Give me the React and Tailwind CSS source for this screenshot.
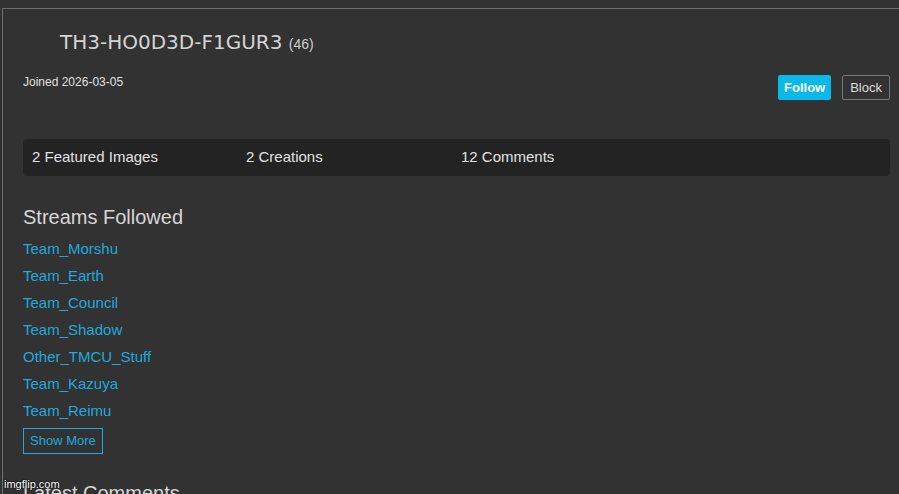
import React from 'react';

const streams = [
  'Team_Morshu',
  'Team_Earth',
  'Team_Council',
  'Team_Shadow',
  'Other_TMCU_Stuff',
  'Team_Kazuya',
  'Team_Reimu',
];

const stats = ['2 Featured Images', '2 Creations', '12 Comments'];

const App = () => {
  return (
    <div
      className="relative h-[494px] overflow-hidden bg-[#323232] pt-[8px]"
      style={{ fontFamily: '"Liberation Sans", Arial, sans-serif' }}
    >
      <div className="ml-[2px] h-full border-l border-t border-[#6e6e6e] pl-[20px] pr-[9px]">
        {/* Header */}
        <h1
          className="mt-[21px] ml-[37px] text-[20px] leading-[24px] text-[#d4d4d4]"
          style={{ fontFamily: '"DejaVu Sans", sans-serif' }}
        >
          TH3-HO0D3D-F1GUR3{' '}
          <span className="text-[14px] text-[#cfcfcf]" style={{ fontFamily: '"Liberation Sans", Arial, sans-serif' }}>
            (46)
          </span>
        </h1>

        <div className="mt-[17px] flex items-start justify-between">
          <div className="pt-[2px] text-[12px] leading-[14px] text-[#e0e0e0]">Joined 2026-03-05</div>
          <div className="mt-[2px] flex gap-[11px]">
            <button className="h-[25px] rounded-[2px] bg-[#0bb8ea] px-[6px] text-[13px] font-bold text-white">
              Follow
            </button>
            <button className="h-[25px] rounded-[2px] border border-[#777] px-[7px] text-[13px] text-[#dcdcdc]">
              Block
            </button>
          </div>
        </div>

        {/* Stats bar */}
        <div className="mt-[39px] flex h-[37px] items-center rounded-[4px] bg-[#232323] px-[9px] text-[15px] text-[#e2e2e2]">
          <div className="w-[214px]">{stats[0]}</div>
          <div className="w-[215px]">{stats[1]}</div>
          <div>{stats[2]}</div>
        </div>

        {/* Streams */}
        <h2 className="mt-[29px] text-[20px] leading-[24px] text-[#d6d6d6]">Streams Followed</h2>
        <div className="mt-[6px] flex flex-col">
          {streams.map((s) => (
            <a key={s} className="h-[27px] text-[15px] leading-[27px] text-[#1fa9dc]">
              {s}
            </a>
          ))}
        </div>
        <button className="mt-[4px] h-[26px] border border-[#1fa9dc] px-[6px] text-[13px] text-[#1fa9dc]">
          Show More
        </button>

        <h2 className="mt-[27px] text-[20px] leading-[24px] text-[#d6d6d6]">Latest Comments</h2>
      </div>

      <div
        className="absolute left-[4px] top-[478px] text-[11px] leading-[12px] text-white"
        style={{ textShadow: '0 0 2px #000, 0 0 1px #000' }}
      >
        imgflip.com
      </div>
    </div>
  );
};

export default App;
